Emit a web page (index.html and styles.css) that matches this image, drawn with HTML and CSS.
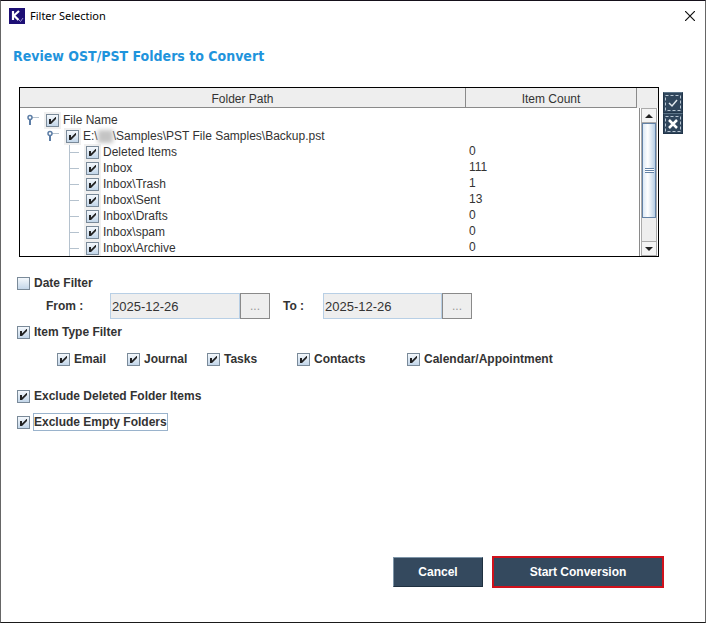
FILE: index.html
```html
<!DOCTYPE html>
<html lang="en">
<head>
    <meta charset="UTF-8">
    <meta name="viewport" content="width=device-width, initial-scale=1.0">
    <title>Filter Selection</title>
    <link rel="stylesheet" href="styles.css">
</head>
<body>
    <!-- shared icons -->
    <svg class="defs" aria-hidden="true">
        <symbol id="handle" viewBox="0 0 12 12">
            <path d="M5 3.500h7" stroke="#b5c2ce"/>
            <path d="M3 5v6" stroke="#5c7da6" stroke-width="2"/>
            <circle cx="3" cy="3.500" r="2" fill="#fff" stroke="#5c7da6" stroke-width="1.500"/>
        </symbol>
    </svg>

    <div class="window">
        <header class="titlebar">
            <svg class="logo" viewBox="0 0 16 16" aria-hidden="true">
                <rect width="16" height="16" fill="#1d0f75"/>
                <path d="M4 3v9M10 3L5 7.500L9.500 12" fill="none" stroke="#fff" stroke-width="2.200"/>
                <path d="M10 12l1.500 1.500L14 10" fill="none" stroke="#9a8fd0"/>
            </svg>
            <span class="title">Filter Selection</span>
            <button class="close" aria-label="Close">
                <svg viewBox="0 0 10 10" width="10" height="10"><path d="M0 0L10 10M10 0L0 10" stroke="#111" stroke-width="1.200"/></svg>
            </button>
        </header>

        <main>
            <h1>Review OST/PST Folders to Convert</h1>

            <div class="folders">
                <div class="pane">
                    <table>
                        <thead>
                            <tr><th>Folder Path</th><th class="count">Item Count</th><th class="corner"></th></tr>
                        </thead>
                        <tbody>
                            <tr>
                                <td><div class="node level1"><button class="handle" aria-label="Collapse"><svg><use href="#handle"/></svg></button><label><input type="checkbox" checked>File Name</label></div></td>
                                <td></td>
                            </tr>
                            <tr>
                                <td><div class="node level2"><button class="handle" aria-label="Collapse"><svg><use href="#handle"/></svg></button><label><input type="checkbox" checked>E:\<span class="hidden-part"></span>\Samples\PST File Samples\Backup.pst</label></div></td>
                                <td></td>
                            </tr>
                            <tr>
                                <td><div class="node leaf"><label><input type="checkbox" checked>Deleted Items</label></div></td>
                                <td>0</td>
                            </tr>
                            <tr>
                                <td><div class="node leaf"><label><input type="checkbox" checked>Inbox</label></div></td>
                                <td>111</td>
                            </tr>
                            <tr>
                                <td><div class="node leaf"><label><input type="checkbox" checked>Inbox\Trash</label></div></td>
                                <td>1</td>
                            </tr>
                            <tr>
                                <td><div class="node leaf"><label><input type="checkbox" checked>Inbox\Sent</label></div></td>
                                <td>13</td>
                            </tr>
                            <tr>
                                <td><div class="node leaf"><label><input type="checkbox" checked>Inbox\Drafts</label></div></td>
                                <td>0</td>
                            </tr>
                            <tr>
                                <td><div class="node leaf"><label><input type="checkbox" checked>Inbox\spam</label></div></td>
                                <td>0</td>
                            </tr>
                            <tr>
                                <td><div class="node leaf"><label><input type="checkbox" checked>Inbox\Archive</label></div></td>
                                <td>0</td>
                            </tr>
                        </tbody>
                    </table>
                    <div class="scrollbar">
                        <button class="arrow" aria-label="Scroll up"><svg viewBox="0 0 8 4" width="8" height="4"><path d="M0 4L4 0L8 4z" fill="#222"/></svg></button>
                        <div class="track">
                            <div class="thumb"><span class="grip"></span></div>
                        </div>
                        <button class="arrow down" aria-label="Scroll down"><svg viewBox="0 0 8 4" width="8" height="4"><path d="M0 0L4 4L8 0z" fill="#222"/></svg></button>
                    </div>
                </div>
                <div class="side">
                    <button aria-label="Select all">
                        <svg viewBox="0 0 16 16" width="16" height="16" fill="none"><rect x="0.500" y="0.500" width="15" height="15" stroke="#b9c6d2" stroke-dasharray="3 2"/><path d="M4 8l3 3l5-6" stroke="#dfe6ec" stroke-width="1.500"/></svg>
                    </button>
                    <button aria-label="Clear all">
                        <svg viewBox="0 0 16 16" width="16" height="16" fill="none"><rect x="0.500" y="0.500" width="15" height="15" stroke="#b9c6d2" stroke-dasharray="3 2"/><path d="M4 4l8 8M12 4l-8 8" stroke="#fff" stroke-width="2.500"/></svg>
                    </button>
                </div>
            </div>

            <form class="filters">
                <label class="option"><input type="checkbox">Date Filter</label>
                <div class="dates">
                    <label for="from">From :</label>
                    <input type="text" id="from" value="2025-12-26" readonly>
                    <button type="button" aria-label="Pick start date">...</button>
                    <label for="to" class="to">To :</label>
                    <input type="text" id="to" value="2025-12-26" readonly>
                    <button type="button" aria-label="Pick end date">...</button>
                </div>
                <label class="option"><input type="checkbox" checked>Item Type Filter</label>
                <div class="types">
                    <label class="option"><input type="checkbox" checked>Email</label>
                    <label class="option"><input type="checkbox" checked>Journal</label>
                    <label class="option"><input type="checkbox" checked>Tasks</label>
                    <label class="option"><input type="checkbox" checked>Contacts</label>
                    <label class="option"><input type="checkbox" checked>Calendar/Appointment</label>
                </div>
                <label class="option exclude"><input type="checkbox" checked>Exclude Deleted Folder Items</label>
                <label class="option exclude"><input type="checkbox" checked><span class="focused">Exclude Empty Folders</span></label>
            </form>
        </main>

        <footer>
            <button class="action">Cancel</button>
            <button class="action primary">Start Conversion</button>
        </footer>
    </div>
</body>
</html>
```
FILE: styles.css
```css
* {
    box-sizing: border-box;
}
body {
    margin: 0;
    background: #fff;
    color: #333;
    font-family: "Liberation Sans", Arial, sans-serif;
    font-size: 12px;
    line-height: 16px;
}
button {
    display: flex;
    align-items: center;
    justify-content: center;
    margin: 0;
    padding: 0;
    border: none;
    background: none;
    font: inherit;
    color: inherit;
}
.defs {
    display: none;
}
.window {
    display: flex;
    flex-direction: column;
    min-height: 100vh;
    border: 1px solid #666;
    border-top-color: #15101a;
    border-bottom-color: #1a1a1a;
}

/* title bar */
.titlebar {
    display: flex;
    align-items: center;
    height: 30px;
    padding: 0 10px 0 8px;
    color: #000;
    font-family: "Noto Sans", sans-serif;
    font-size: 11px;
}
.logo {
    width: 16px;
    height: 16px;
}
.title {
    flex: 1;
    margin-left: 5px;
}
h1 {
    margin: 15px 12px 20px;
    color: #1f94dc;
    font-family: "DejaVu Sans Condensed", "DejaVu Sans", sans-serif;
    font-size: 14px;
    font-weight: bold;
    line-height: 21px;
}

/* checkboxes */
input[type="checkbox"] {
    appearance: none;
    flex: none;
    width: 13px;
    height: 13px;
    margin: 0 4px 0 0;
    border: 1px solid #7a8a99;
    background: linear-gradient(#f4f8fc, #c3d6e9);
}
input[type="checkbox"]:checked {
    background: url("data:image/svg+xml,%3Csvg xmlns='http://www.w3.org/2000/svg' viewBox='0 0 11 11'%3E%3Cpath d='M2 4h2v2.500L8.500 2H9v2L4 9H2z' fill='%23222'/%3E%3C/svg%3E"), linear-gradient(#f4f8fc, #c3d6e9);
}

/* folder tree */
.folders {
    display: flex;
    align-items: flex-start;
    gap: 4px;
    margin: 0 22px 0 18px;
}
.pane {
    display: grid;
    flex: 1;
    height: 170px;
    border: 1px solid #000;
    overflow: hidden;
}
table {
    grid-area: 1 / 1;
    width: 100%;
    height: max-content;
    border-collapse: separate;
    border-spacing: 0;
    table-layout: fixed;
}
th {
    height: 20px;
    padding: 3px 0 0;
    border-right: 1px solid #8a8a8a;
    border-bottom: 1px solid #8a8a8a;
    background: #eee;
    font-weight: normal;
    line-height: 16px;
}
.count {
    width: 171px;
}
.corner {
    width: 21px;
    border: none;
}
tbody::before {
    content: "";
    display: block;
    height: 4px;
}
td {
    height: 16px;
    padding: 0 0 0 3px;
    line-height: 14px;
    vertical-align: top;
}
td:first-child {
    padding: 0;
}
.node,
.node label {
    display: flex;
    align-items: center;
    height: 16px;
    line-height: 16px;
    white-space: pre;
}
.node input[type="checkbox"] {
    outline: 2px solid #f0f0f0;
}
.level1 {
    padding-left: 7px;
}
.level2 {
    padding-left: 27px;
}
.handle {
    width: 12px;
    margin-right: 7px;
}
.handle svg {
    width: 12px;
    height: 12px;
}
.leaf {
    margin-left: 49px;
    border-left: 1px solid #b5c2ce;
}
.leaf::before {
    content: "";
    width: 9px;
    margin-right: 7px;
    border-top: 1px solid #b5c2ce;
}
.hidden-part {
    width: 15px;
    height: 13px;
    background: #c4c4c4;
    filter: blur(2px);
}

/* scroll bar */
.scrollbar {
    grid-area: 1 / 1;
    justify-self: end;
    display: flex;
    flex-direction: column;
    width: 19px;
    height: 148px;
    margin-top: 20px;
    padding: 0 1px;
    border-left: 1px solid #8a8a8a;
    background: #fff;
}
.arrow {
    height: 15px;
    border: 1px solid #aaa;
    background: #f4f4f4;
}
.track {
    flex: 1;
    border: 1px solid #aaa;
    border-width: 0 1px;
    background: #eee;
}
.thumb {
    display: flex;
    align-items: center;
    justify-content: center;
    height: 95px;
    border: 1px solid #6382a6;
    background: linear-gradient(90deg, #dce9f6, #fff 40%, #b8cfe5);
}
.grip {
    width: 9px;
    height: 5px;
    background: repeating-linear-gradient(#6382a6 0 1px, #fff 1px 2px);
}
.side {
    margin-top: 5px;
}
.side button {
    width: 20px;
    height: 21px;
    border: 1px solid #22364a;
    border-top-color: #5c7488;
    background: #30465c;
}

/* filters */
.filters {
    margin: 18px 16px 0;
    font-weight: bold;
}
.option {
    display: flex;
    align-items: center;
    height: 16px;
}
.dates {
    display: flex;
    align-items: center;
    height: 28px;
    margin: 1px 0 4px 29px;
}
.dates label {
    width: 64px;
}
.dates .to {
    width: 40px;
    margin-left: 13px;
}
.dates input {
    width: 130px;
    height: 26px;
    padding: 2px 1px;
    border: 1px solid #b8cfe5;
    background: #eee;
    color: #333;
    font: 13px "Liberation Sans", Arial, sans-serif;
}
.dates .to + input {
    width: 119px;
}
.dates button {
    width: 30px;
    height: 26px;
    border: 1px solid #8a8a8a;
    background: #eee;
    color: #999;
    font-weight: normal;
}
.types {
    display: grid;
    grid-template-columns: 70px 80px 90px 110px auto;
    margin: 11px 0 21px 40px;
}
.exclude {
    margin-bottom: 10px;
}
.focused {
    margin-left: -1px;
    border: 1px solid #9ab3cc;
}

/* bottom buttons */
footer {
    display: flex;
    align-items: center;
    justify-content: flex-end;
    gap: 9px;
    margin-top: auto;
    padding: 0 41px 34px;
}
.action {
    width: 90px;
    height: 30px;
    border: 1px solid #1f3040;
    border-top-color: #7e95a8;
    border-left-color: #7e95a8;
    background: #34495e;
    color: #fff;
    font-weight: bold;
}
.primary {
    width: 172px;
    height: 32px;
    border: 2px solid #d0111b;
}
```
